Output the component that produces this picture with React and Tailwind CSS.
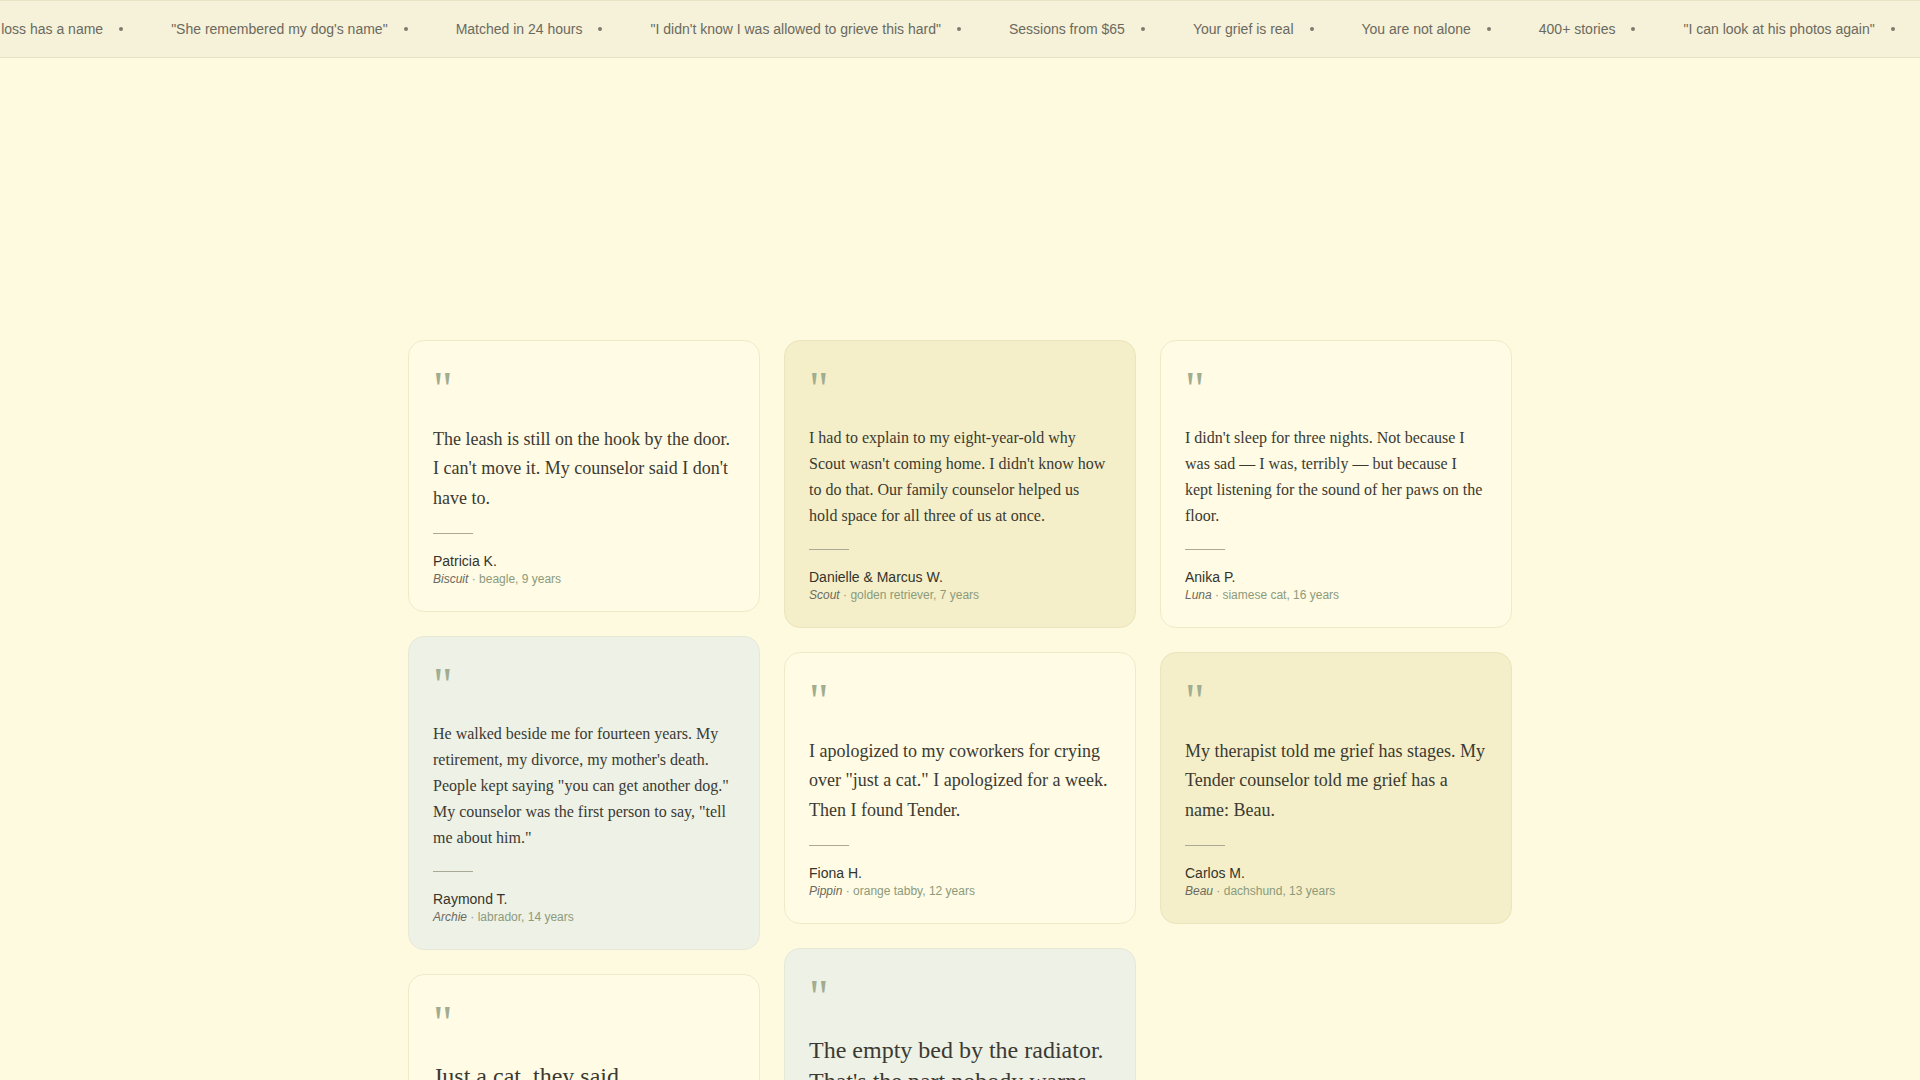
import React from "react";

const tickerItems = [
  "Your loss has a name",
  '"She remembered my dog\'s name"',
  "Matched in 24 hours",
  '"I didn\'t know I was allowed to grieve this hard"',
  "Sessions from $65",
  "Your grief is real",
  "You are not alone",
  "400+ stories",
  '"I can look at his photos again"',
  "Your loss has a name",
  '"She remembered my dog\'s name"',
];

const columns = [
  [
    {
      text: "The leash is still on the hook by the door. I can't move it. My counselor said I don't have to.",
      size: "lg",
      tone: "plain",
      name: "Patricia K.",
      pet: "Biscuit",
      detail: "beagle, 9 years",
    },
    {
      text: 'He walked beside me for fourteen years. My retirement, my divorce, my mother\'s death. People kept saying "you can get another dog." My counselor was the first person to say, "tell me about him."',
      size: "base",
      tone: "sage",
      name: "Raymond T.",
      pet: "Archie",
      detail: "labrador, 14 years",
    },
    {
      text: "Just a cat, they said. Apparently they never met Mabel.",
      size: "2xl",
      tone: "plain",
      name: "Helen R.",
      pet: "Mabel",
      detail: "tortoiseshell, 19 years",
    },
  ],
  [
    {
      text: "I had to explain to my eight-year-old why Scout wasn't coming home. I didn't know how to do that. Our family counselor helped us hold space for all three of us at once.",
      size: "base",
      tone: "butter",
      name: "Danielle & Marcus W.",
      pet: "Scout",
      detail: "golden retriever, 7 years",
    },
    {
      text: 'I apologized to my coworkers for crying over "just a cat." I apologized for a week. Then I found Tender.',
      size: "lg",
      tone: "plain",
      name: "Fiona H.",
      pet: "Pippin",
      detail: "orange tabby, 12 years",
    },
    {
      text: "The empty bed by the radiator. That's the part nobody warns you about.",
      size: "2xl",
      tone: "sage",
      name: "Tom B.",
      pet: "Otis",
      detail: "greyhound, 11 years",
    },
  ],
  [
    {
      text: "I didn't sleep for three nights. Not because I was sad \u2014 I was, terribly \u2014 but because I kept listening for the sound of her paws on the floor.",
      size: "base",
      tone: "plain",
      name: "Anika P.",
      pet: "Luna",
      detail: "siamese cat, 16 years",
    },
    {
      text: "My therapist told me grief has stages. My Tender counselor told me grief has a name: Beau.",
      size: "lg",
      tone: "butter",
      name: "Carlos M.",
      pet: "Beau",
      detail: "dachshund, 13 years",
    },
  ],
];

const toneClass = {
  plain: "bg-[#fffbe4] border-[#f0eacb]",
  butter: "bg-[#f4efc8] border-[#ebe5bd]",
  sage: "bg-[#eef1e6] border-[#e6e8d8]",
};

const sizeClass = {
  base: "text-base leading-relaxed",
  lg: "text-lg leading-relaxed",
  "2xl": "text-2xl leading-[1.3] mt-3.5",
};

const StoryCard = ({ story }) => (
  <div className={`rounded-2xl border p-6 ${toneClass[story.tone]}`}>
    <div className="text-5xl leading-none h-12 mb-3 text-[#a1ad90] font-['Liberation_Serif',serif]">
      "
    </div>
    <p
      className={`text-[#3b3a32] font-['Liberation_Serif',serif] ${sizeClass[story.size]}`}
    >
      {story.text}
    </p>
    <div className="mt-5 h-px w-10 bg-[#aaa996]" />
    <div className="mt-[17px] font-['Liberation_Sans',sans-serif]">
      <div className="text-sm text-[#35342c]">{story.name}</div>
      <div className="text-xs text-[#8c9a7c]">
        <span className="italic text-[#6b6a5f]">{story.pet}</span> ·{" "}
        {story.detail}
      </div>
    </div>
  </div>
);

const App = () => {
  return (
    <div className="min-h-screen bg-[#fefae0] font-['Liberation_Sans',sans-serif]">
      {/* scrolling ticker */}
      <div className="overflow-hidden border-y border-[#e9e3c5] bg-[#f6f1d9] py-[18px]">
        <div className="flex gap-12 whitespace-nowrap -translate-x-[31px]">
          {tickerItems.map((item, i) => (
            <div key={i} className="flex items-center gap-4 text-sm leading-5 text-[#6b6a5e]">
              <span>{item}</span>
              <span className="h-1 w-1 rounded-full bg-[#7d7c6e]" />
            </div>
          ))}
        </div>
      </div>

      {/* stories */}
      <section className="pt-[282px] pb-24">
        <div className="mx-auto max-w-6xl px-6">
          <div className="grid grid-cols-3 gap-6 items-start">
            {columns.map((col, ci) => (
              <div key={ci} className="flex flex-col gap-6">
                {col.map((story) => (
                  <StoryCard key={story.name} story={story} />
                ))}
              </div>
            ))}
          </div>
        </div>
      </section>
    </div>
  );
};

export default App;
